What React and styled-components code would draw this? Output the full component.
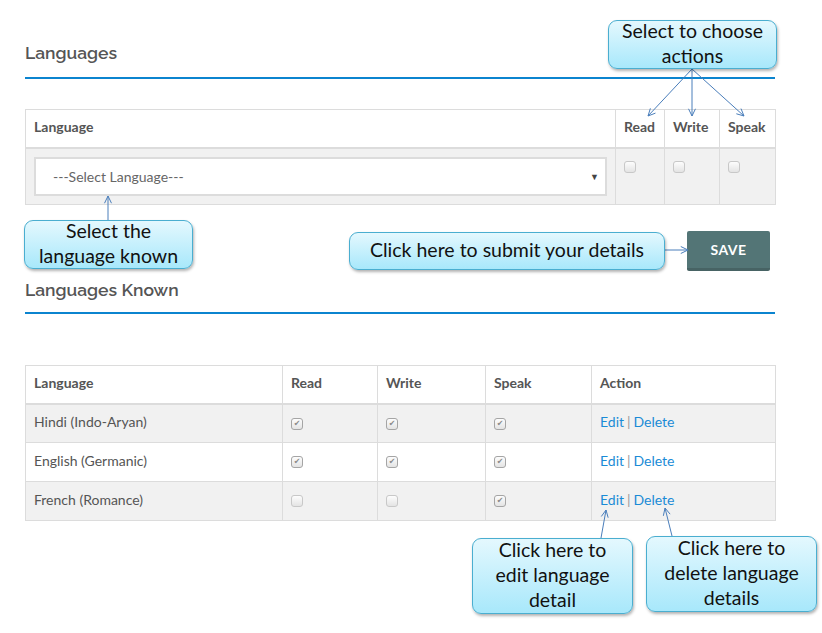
import React from "react";
import styled, { createGlobalStyle } from "styled-components";

const Global = createGlobalStyle`
  html, body { margin: 0; padding: 0; background: #fff; }
  body { font-family: Lato, "Open Sans", sans-serif; }
`;

const Page = styled.div`
  position: relative;
  width: 822px;
  height: 633px;
  overflow: hidden;
  background: #fff;
`;

const Content = styled.div`
  width: 750px;
  padding-left: 25px;
  display: flex;
  flex-direction: column;
`;

const Heading = styled.h2`
  margin: 0;
  padding-top: ${(p) => p.$top}px;
  padding-bottom: ${(p) => p.$bottom}px;
  font-family: Raleway, "Open Sans", sans-serif;
  font-weight: 600;
  font-size: 17.5px;
  line-height: 22px;
  color: #555;
  border-bottom: 2px solid #0b84cf;
`;

const Table = styled.table`
  margin-top: ${(p) => p.$top}px;
  width: 750px;
  border-collapse: collapse;
  table-layout: fixed;
  border: 1px solid #dcdcdc;
  font-size: 14px;
`;

const Th = styled.th`
  text-align: left;
  font-weight: 700;
  color: #555;
  height: 38px;
  padding: 0 8px 3px;
  border: 1px solid #dcdcdc;
  border-bottom: 2px solid #dcdcdc;
  box-sizing: border-box;
`;

const Tr = styled.tr`
  background: ${(p) => (p.$striped ? "#f1f1f1" : "#fff")};
`;

const Td = styled.td`
  color: #555;
  height: ${(p) => p.$h || 39}px;
  padding: 0 8px ${(p) => (p.$top ? 0 : 3)}px;
  border: 1px solid #dcdcdc;
  vertical-align: ${(p) => (p.$top ? "top" : "middle")};
  box-sizing: border-box;
`;

const SelectBox = styled.div`
  display: flex;
  align-items: center;
  justify-content: space-between;
  height: 39px;
  box-sizing: border-box;
  border: 2px solid #dcdcdc;
  background: #fff;
  padding: 0 6px 0 17px;
  font-size: 14px;
  color: #666;
`;

const Caret = styled.span`
  font-size: 9px;
  color: #444;
`;

const Box = styled.span`
  display: inline-block;
  width: 12px;
  height: 12px;
  box-sizing: border-box;
  border: 1px solid ${(p) => (p.$active ? "#a5a5a5" : "#c8c8c8")};
  border-radius: 3px;
  background: linear-gradient(#fdfdfd, #e4e4e4);
  margin-top: ${(p) => p.$mt || 0}px;
  vertical-align: middle;
  color: #8a8a8a;
  font-size: 8px;
  line-height: 10px;
  text-align: center;
  font-family: "DejaVu Sans", sans-serif;
`;

const ActionRow = styled.div`
  display: flex;
  justify-content: flex-end;
  padding-right: 5px;
  margin-top: 26px;
`;

const SaveButton = styled.button`
  width: 83px;
  height: 40px;
  border: none;
  border-bottom: 3px solid #476364;
  border-radius: 2px;
  background: #537576;
  color: #fff;
  font-family: Lato, sans-serif;
  font-weight: 700;
  font-size: 14px;
  letter-spacing: 0.5px;
  padding: 0;
`;

const Link = styled.a`
  color: #1a8bd6;
  text-decoration: none;
  font-size: 14px;
`;

const Sep = styled.span`
  color: #999;
  margin: 0 3px;
`;

const Callout = styled.div`
  position: absolute;
  left: ${(p) => p.$x}px;
  top: ${(p) => p.$y}px;
  width: ${(p) => p.$w}px;
  height: ${(p) => p.$h}px;
  box-sizing: border-box;
  padding-bottom: 3px;
  border: 1px solid #4aaed0;
  border-radius: 9px;
  background: linear-gradient(#e4f8fe, #a8e8fb);
  box-shadow: 1px 2px 3px rgba(0, 0, 0, 0.3);
  display: flex;
  align-items: center;
  justify-content: center;
  text-align: center;
  font-family: Lato, "Open Sans", sans-serif;
  font-size: 19.5px;
  line-height: 25px;
  color: #111;
  white-space: pre-line;
`;

const Arrows = styled.svg`
  position: absolute;
  left: 0;
  top: 0;
  pointer-events: none;
`;

const arrow = (x1, y1, x2, y2) => {
  const a = Math.atan2(y2 - y1, x2 - x1);
  const s = 8;
  const w = 0.45;
  const p1 = [x2 - s * Math.cos(a - w), y2 - s * Math.sin(a - w)];
  const p2 = [x2 - s * Math.cos(a + w), y2 - s * Math.sin(a + w)];
  return (
    <g key={`${x1}-${y1}-${x2}-${y2}`}>
      <line x1={x1} y1={y1} x2={x2} y2={y2} />
      <polyline points={`${p1[0]},${p1[1]} ${x2},${y2} ${p2[0]},${p2[1]}`} fill="none" />
    </g>
  );
};

const known = [
  { name: "Hindi (Indo-Aryan)", r: true, w: true, s: true },
  { name: "English (Germanic)", r: true, w: true, s: true },
  { name: "French (Romance)", r: false, w: false, s: true },
];

const Check = ({ on }) => <Box $active={on}>{on ? "✔" : ""}</Box>;

export default function App() {
  return (
    <Page>
      <Global />
      <Content>
        <Heading $top={42} $bottom={13}>Languages</Heading>
        <Table $top={30}>
          <colgroup>
            <col style={{ width: 590 }} />
            <col style={{ width: 49 }} />
            <col style={{ width: 55 }} />
            <col style={{ width: 56 }} />
          </colgroup>
          <thead>
            <tr>
              <Th>Language</Th>
              <Th>Read</Th>
              <Th>Write</Th>
              <Th>Speak</Th>
            </tr>
          </thead>
          <tbody>
            <Tr $striped>
              <Td $h={57} $top style={{ paddingTop: 8 }}>
                <SelectBox>
                  ---Select Language---
                  <Caret>▼</Caret>
                </SelectBox>
              </Td>
              <Td $top><Box $mt={12} /></Td>
              <Td $top><Box $mt={12} /></Td>
              <Td $top><Box $mt={12} /></Td>
            </Tr>
          </tbody>
        </Table>
        <ActionRow>
          <SaveButton>SAVE</SaveButton>
        </ActionRow>
        <Heading $top={8} $bottom={11}>Languages Known</Heading>
        <Table $top={51}>
          <colgroup>
            <col style={{ width: 257 }} />
            <col style={{ width: 95 }} />
            <col style={{ width: 108 }} />
            <col style={{ width: 106 }} />
            <col style={{ width: 184 }} />
          </colgroup>
          <thead>
            <tr>
              <Th>Language</Th>
              <Th>Read</Th>
              <Th>Write</Th>
              <Th>Speak</Th>
              <Th>Action</Th>
            </tr>
          </thead>
          <tbody>
            {known.map((k, i) => (
              <Tr key={k.name} $striped={i % 2 === 0}>
                <Td>{k.name}</Td>
                <Td><Check on={k.r} /></Td>
                <Td><Check on={k.w} /></Td>
                <Td><Check on={k.s} /></Td>
                <Td>
                  <Link>Edit</Link>
                  <Sep>|</Sep>
                  <Link>Delete</Link>
                </Td>
              </Tr>
            ))}
          </tbody>
        </Table>
      </Content>

      <Arrows width="822" height="633" stroke="#4a7ebb" strokeWidth="1">
        {arrow(692, 69, 648, 116)}
        {arrow(692, 69, 692, 116)}
        {arrow(692, 69, 744, 116)}
        {arrow(108, 220, 108, 196)}
        {arrow(665, 250, 688, 250)}
        {arrow(601, 538, 606, 510)}
        {arrow(672, 536, 665, 508)}
      </Arrows>

      <Callout $x={608} $y={20} $w={169} $h={49}>{"Select to choose\nactions"}</Callout>
      <Callout $x={24} $y={220} $w={169} $h={49}>{"Select the\nlanguage known"}</Callout>
      <Callout $x={349} $y={232} $w={316} $h={38}>Click here to submit your details</Callout>
      <Callout $x={472} $y={538} $w={161} $h={76}>{"Click here to\nedit language\ndetail"}</Callout>
      <Callout $x={646} $y={536} $w={171} $h={76}>{"Click here to\ndelete language\ndetails"}</Callout>
    </Page>
  );
}
